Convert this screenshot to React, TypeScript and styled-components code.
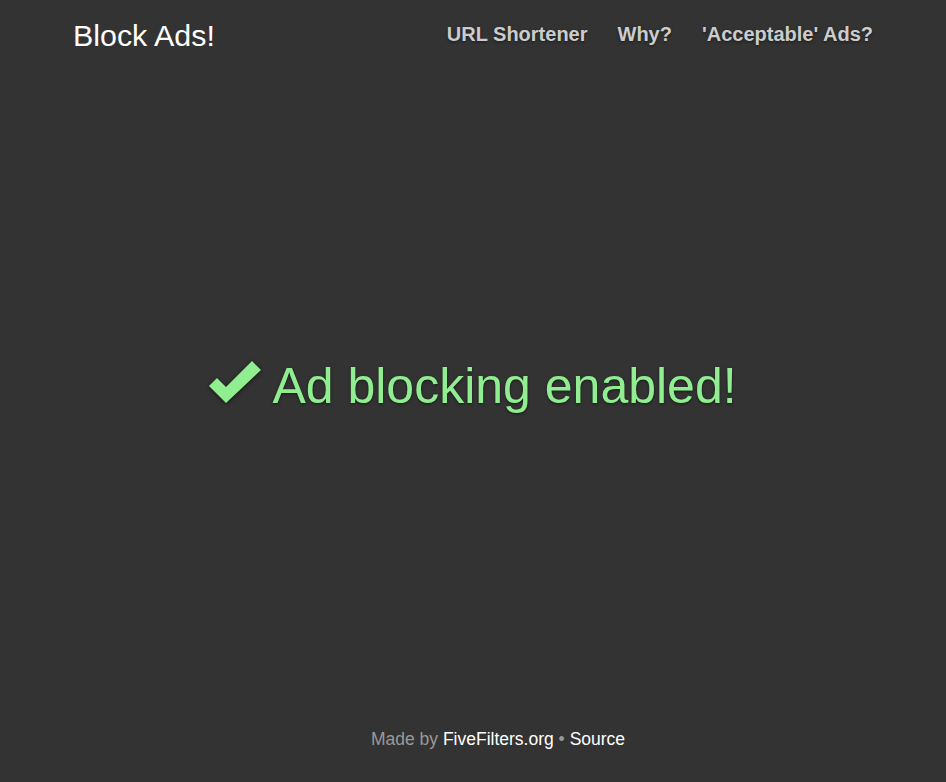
import React from "react";
import styled, { createGlobalStyle } from "styled-components";

const Global = createGlobalStyle`
  html, body { margin: 0; padding: 0; height: 100%; }
  body {
    background: #333333;
    font-family: "Liberation Sans", Arial, Helvetica, sans-serif;
    color: #ffffff;
  }
  #root { height: 100%; }
`;

const Page = styled.div`
  min-height: 100vh;
  display: flex;
  flex-direction: column;
`;

const Masthead = styled.header`
  width: 800px;
  margin: 0 auto;
  display: flex;
  justify-content: space-between;
  align-items: flex-start;
`;

const Brand = styled.h3`
  margin: 19px 0 0;
  font-size: 30.4px;
  line-height: 33px;
  font-weight: 400;
  color: #ffffff;
`;

const Nav = styled.nav`
  margin-top: 23px;
  display: flex;
  gap: 30px;
`;

const NavLink = styled.a`
  font-size: 20px;
  line-height: 22px;
  font-weight: 700;
  color: #cccccc;
  text-decoration: none;
  text-shadow: 0 1px 3px rgba(0, 0, 0, 0.5);
`;

const Main = styled.main`
  flex: 1;
  display: flex;
  align-items: center;
  justify-content: center;
  padding-bottom: 6px;
`;

const Headline = styled.h1`
  margin: 0;
  display: flex;
  align-items: center;
  gap: 11px;
  font-size: 50px;
  line-height: 55px;
  font-weight: 400;
  color: #90ee90;
  text-shadow: 0 1px 3px rgba(0, 0, 0, 0.5);
`;

const Check = styled.svg`
  width: 52px;
  height: 42px;
  margin-bottom: 9px;
  filter: drop-shadow(0 1px 2px rgba(0, 0, 0, 0.6));
`;

const Footer = styled.footer`
  padding: 0 0 29px 50px;
  text-align: center;
  font-size: 17.5px;
  line-height: 27px;
  color: #999999;
`;

const FooterLink = styled.a`
  color: #ffffff;
  text-decoration: none;
`;

export default function App() {
  return (
    <>
      <Global />
      <Page>
        <Masthead>
          <Brand>Block Ads!</Brand>
          <Nav>
            <NavLink href="#">URL Shortener</NavLink>
            <NavLink href="#">Why?</NavLink>
            <NavLink href="#">'Acceptable' Ads?</NavLink>
          </Nav>
        </Masthead>
        <Main>
          <Headline>
            <Check viewBox="0 0 52 42" aria-hidden="true">
              <polygon points="0,25 8,17 17,26 43,0 52,9 17,42" fill="#90ee90" />
            </Check>
            <span>Ad blocking enabled!</span>
          </Headline>
        </Main>
        <Footer>
          Made by <FooterLink href="#">FiveFilters.org</FooterLink> •{" "}
          <FooterLink href="#">Source</FooterLink>
        </Footer>
      </Page>
    </>
  );
}
